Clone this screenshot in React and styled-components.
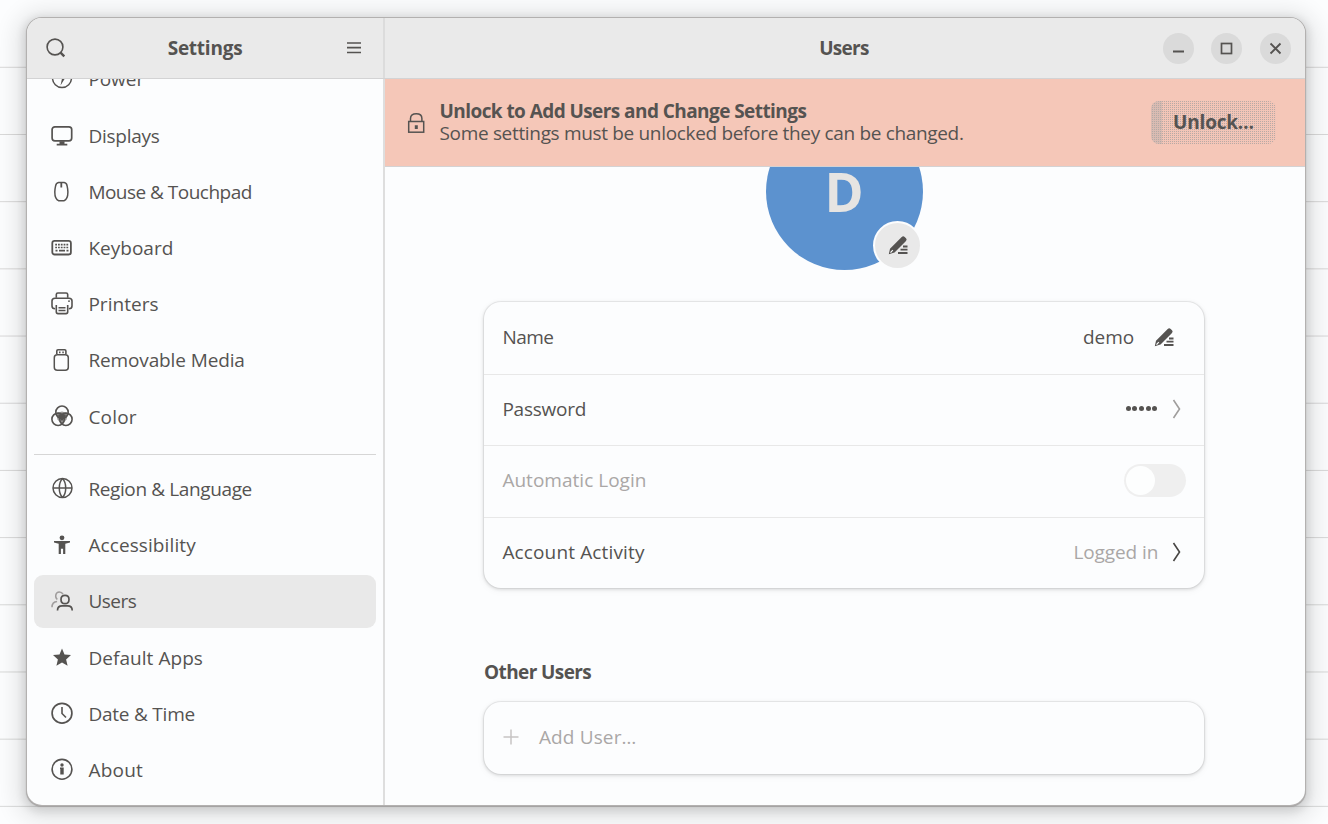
import React from "react";
import styled, { createGlobalStyle } from "styled-components";

const INK = "#555351";

const GlobalStyle = createGlobalStyle`
  * { box-sizing: border-box; }
  html, body { margin: 0; height: 100%; overflow: hidden; }
  body { font-family: "Open Sans", "Noto Sans", sans-serif; font-size: 19px; color: ${INK}; }
`;

const Desktop = styled.div`
  width: 1328px;
  height: 824px;
  padding: 18px 23px 19px 27px;
  background:
    linear-gradient(#fcfdfe, #fcfdfe) 0 0 / 100% 10px no-repeat,
    linear-gradient(to bottom, transparent 66.2px, #d8d8d8 66.2px) 0 0.6px / 100% 67.2px #fcfdfe;
`;

const Window = styled.div`
  display: flex;
  flex-direction: column;
  width: 1278px;
  height: 786.5px;
  overflow: hidden;
  border-radius: 15px;
  background: #fcfdfe;
  box-shadow: 0 0 0 1px #b3b1b0, 0 1px 1px 1px #a3a1a1, 0 3px 8px 4px rgba(0, 0, 0, 0.11),
    0 4px 22px 12px rgba(0, 0, 0, 0.09);
`;

const Header = styled.header`
  display: grid;
  grid-template-columns: 358px 1fr;
  height: 61px;
  flex: none;
  background: #eaeaea;
  border-bottom: 1px solid #d3d3d4;
`;

const SideHeader = styled.div`
  display: grid;
  grid-template-columns: 22px 1fr 22px;
  align-items: center;
  padding: 0 18px 0 18px;
  border-right: 2px solid #dcdcdc;
`;

const MainHeader = styled.div`
  display: grid;
  grid-template-columns: 128px 1fr 128px;
  align-items: center;
  padding: 0 14.5px 0 13.5px;
`;

const Title = styled.h1`
  margin: 0 1px 0 0;
  font-size: 19px;
  line-height: 26px;
  font-weight: 700;
  text-align: center;
  white-space: nowrap;
  letter-spacing: ${(p) => p.$ls || 0}px;
`;

const SideTitle = styled(Title)`
  margin: 0;
`;

const WindowButtons = styled.div`
  grid-column: 3;
  display: flex;
  justify-content: space-between;
`;

const RoundButton = styled.button`
  display: grid;
  place-items: center;
  width: 31px;
  height: 31px;
  padding: 0;
  border: 0;
  border-radius: 50%;
  background: #dadada;
  color: ${INK};
`;

const Body = styled.div`
  display: grid;
  grid-template-columns: 358px 1fr;
  flex: 1;
  min-height: 0;
`;

const Sidebar = styled.nav`
  overflow: hidden;
  padding: 0 7px;
  border-right: 2px solid #dedede;
`;

const NavList = styled.div`
  margin-top: ${(p) => p.$shift || 0}px;
  display: flex;
  flex-direction: column;
  gap: 2.7px;
`;

const NavItem = styled.div`
  display: flex;
  align-items: center;
  gap: 14.2px;
  height: 53.5px;
  padding-left: 16.2px;
  border-radius: 9px;
  background: ${(p) => (p.$active ? "#e9e9e9" : "transparent")};
`;

const Divider = styled.hr`
  height: 1px;
  margin: 10.5px 0 7.5px;
  border: 0;
  background: #d6d6d6;
`;

const Label = styled.span`
  white-space: nowrap;
  line-height: 26px;
  letter-spacing: ${(p) => p.$ls || 0}px;
  color: ${(p) => (p.$dim ? "#aaa7a6" : INK)};
`;

const Main = styled.main`
  display: flex;
  flex-direction: column;
  overflow: hidden;
`;

const Banner = styled.section`
  display: flex;
  align-items: center;
  flex: none;
  height: 88px;
  padding: 0 29px 0 22px;
  background: #f5c7b8;
  border-bottom: 1px solid #d4d2d3;
`;

const BannerText = styled.div`
  display: flex;
  flex-direction: column;
  flex: 1;
  margin: 0 0 0.4px 12.5px;
`;

const BannerTitle = styled.strong`
  line-height: 22px;
  font-weight: 700;
  letter-spacing: -0.57px;
`;

const BannerDetail = styled.span`
  line-height: 22px;
  letter-spacing: -0.33px;
`;

const UnlockButton = styled.button`
  width: 125px;
  height: 43px;
  margin-bottom: 1px;
  padding: 0 0 1px;
  border: 0;
  border-radius: 8px;
  background:
    linear-gradient(to right, rgba(170, 168, 168, 0.35) 11px, transparent 11px),
    repeating-conic-gradient(#b8aaa5 0 25%, #f3c5b7 0 100%) 0 0 / 2px 2px;
  color: ${INK};
  font: inherit;
  font-weight: 700;
  letter-spacing: -0.2px;
`;

const Content = styled.div`
  display: flex;
  flex-direction: column;
  align-items: center;
  flex: 1;
  min-height: 0;
  padding-right: 1.6px;
  overflow: hidden;
`;

const Avatar = styled.div`
  position: relative;
  flex: none;
  display: grid;
  place-items: center;
  width: 157px;
  height: 157px;
  margin-top: -54px;
  border-radius: 50%;
  background: #5c92cf;
  color: #e6e4e2;
  font: 700 53px/60px "Open Sans", "Noto Sans", sans-serif;
`;

const AvatarEdit = styled.button`
  position: absolute;
  right: 0.5px;
  bottom: 0.5px;
  display: grid;
  place-items: center;
  width: 49px;
  height: 49px;
  padding: 0;
  border: 2px solid #fcfdfe;
  border-radius: 50%;
  background: #e9e9e9;
  color: ${INK};
`;

const Card = styled.section`
  flex: none;
  width: 720px;
  margin-top: ${(p) => p.$top}px;
  border-radius: 17px;
  background: #fcfdfe;
  box-shadow: 0 0 0 1px rgba(0, 0, 0, 0.05), 0 1px 3px 1px rgba(0, 0, 0, 0.1), 0 2px 7px 2px rgba(0, 0, 0, 0.03);
`;

const Row = styled.div`
  display: flex;
  align-items: center;
  height: 71.5px;
  padding: 0 18px 2px 18.2px;
  & + & { border-top: 1px solid #e8e8e8; }
`;

const Value = styled.div`
  display: flex;
  align-items: center;
  gap: ${(p) => p.$gap}px;
  margin-left: auto;
  margin-right: ${(p) => p.$inset || 0}px;
`;

const AddAction = styled.div`
  display: flex;
  align-items: center;
  gap: 17.5px;
  margin: 1px 0 0 -1px;
`;

const Dots = styled.span`
  display: flex;
  gap: 1.6px;
  i { width: 5px; height: 5px; border-radius: 50%; background: ${INK}; }
`;

const Toggle = styled.span`
  display: flex;
  align-items: center;
  width: 62px;
  height: 33px;
  margin-top: 1px;
  padding: 2px;
  border-radius: 17px;
  background: #efefef;
  i { width: 29px; height: 29px; border-radius: 50%; background: #fdfefe; }
`;

const SectionTitle = styled.h2`
  align-self: flex-start;
  margin: 71px 0 0 99px;
  font-size: 19px;
  line-height: 26px;
  font-weight: 700;
  letter-spacing: -0.6px;
`;

const Glyph = styled.svg`
  display: block;
  flex: none;
  fill: none;
  stroke: currentColor;
`;

const ChevronGlyph = styled(Glyph)`
  color: ${(p) => (p.$dim ? "#a09e9d" : "#484644")};
`;

function Icon({ size = 24, children }) {
  return (
    <Glyph width={size} height={size} viewBox={`0 0 ${size} ${size}`} strokeWidth="1.5">
      {children}
    </Glyph>
  );
}

const solid = { fill: "currentColor", stroke: "none" };

const icons = {
  power: <><circle cx="12" cy="11" r="9.5" /><path d="M13.3 6 9.3 12h2.6l-1.4 6.5 5-8h-2.9z" {...solid} /></>,
  displays: (
    <>
      <rect x="2.1" y="2.8" width="19.6" height="14" rx="2.8" strokeWidth="1.7" />
      <path d="M9.5 17.2h5v2.6h2.8v1.6H6.7v-1.6h2.8z" {...solid} />
    </>
  ),
  mouse: (
    <>
      <path d="M8.6 2.6h5.600q2.400.4 2.900 3.200c.5 2.200.8 4.200.8 6.200 0 4.700-1.200 7.800-3.900 8.700H8.700C6 19.800 4.800 16.700 4.800 12c0-2 .3-4 .8-6.200q.6-2.800 3-3.200z" />
      <path d="M11.3 2.5v5" strokeWidth="1.8" />
    </>
  ),
  keyboard: (
    <>
      <rect x="2.3" y="4.900" width="18.6" height="13.6" rx="2.3" strokeWidth="1.8" />
      <path d="M5.2 8.700H18.5M5.2 11.500H18.5" strokeDasharray="1.8 1" strokeWidth="1.7" />
      <path d="M5.5 14.600h2M9 14.600h6M16.5 14.600h2" strokeWidth="1.7" />
    </>
  ),
  printers: (
    <>
      <path d="M6.3 5.7V2.6C6.3 1.5 6.8 1 7.9 1h8.2c1.1 0 1.6.5 1.6 1.6v3.1" strokeWidth="1.6" />
      <path d="M5.2 16.7C3 16.7 2 15.9 2 14V9.1C2 7.2 3.2 6.2 5 6.2h14c1.9 0 3 1 3 2.9V14c0 1.9-1 2.7-3.2 2.7" strokeWidth="1.6" />
      <path d="M6.3 13v6.8c0 1.2.6 1.8 1.7 1.8h8c1.1 0 1.7-.6 1.7-1.8V13" strokeWidth="1.6" />
      <path d="M8.5 15.7h7M8.5 18.4h7" strokeWidth="1.5" />
      <path d="M18 8.5h2v1.2h-2z" {...solid} />
    </>
  ),
  usb: (
    <>
      <rect x="4.3" y="6.7" width="14" height="15.5" rx="3" />
      <path d="M6.8 6V2.900c0-.8.4-1.200 1.200-1.200h6.700c.8 0 1.200.4 1.200 1.200V6" strokeWidth="1.6" />
      <path d="M9 3.400h1.500v1.800H9zM12.300 3.400h1.500v1.800h-1.500z" {...solid} />
    </>
  ),
  color: (
    <>
      <path d="M6 8 12 6.500 18 8l-1.500 6.500L12 20l-4.500-5.500z" fill="#9c9a99" stroke="none" />
      <circle cx="12" cy="7.200" r="6.200" strokeWidth="1.6" />
      <circle cx="8.100" cy="14.300" r="6.200" strokeWidth="1.6" />
      <circle cx="15.900" cy="14.300" r="6.200" strokeWidth="1.6" />
      <path d="M8 9.800Q12 8 16 9.800 15.500 13.600 12 16 8.500 13.600 8 9.800z" {...solid} />
    </>
  ),
  globe: (
    <>
      <circle cx="12.5" cy="11" r="9.5" />
      <path d="M3 11h19M12.5 1.500C8.200 6 8.200 16 12.500 20.500M12.500 1.500C16.800 6 16.800 16 12.500 20.500" />
    </>
  ),
  accessibility: (
    <g {...solid}>
      <circle cx="12" cy="4.800" r="2.400" />
      <path d="M4 8h16v1.600l-4.700 1.200v10.300h-2.200v-5.400h-2.200v5.400H8.700V10.800L4 9.600z" />
    </g>
  ),
  users: (
    <>
      <g stroke="#a09d9d">
        <path d="M7.300 10.500C4.600 8.300 5.400 3 9.300 3c1.900 0 3 .8 3.700 2.200M2 18.300c0-3.700 1.700-5.600 5.100-5.800" />
      </g>
      <path d="M11 10.500c0-2.700 1.500-4.100 4-4.100s4 1.400 4 4.100-1.500 4.200-4 4.200-4-1.500-4-4.200z" strokeWidth="1.7" />
      <path d="M7.500 21.500c0-3.100 1.500-4.600 4.600-4.600h5.500c3.100 0 4.600 1.500 4.600 4.600" strokeWidth="1.7" />
    </>
  ),
  star: <path d="m12 2.500 2.500 6 6.500.5-4.900 4.400 1.500 6.400L12 16.400l-5.600 3.400 1.500-6.400L3 9l6.500-.5z" {...solid} />,
  clock: <><circle cx="12" cy="11.200" r="9.900" strokeWidth="1.7" /><path d="M12 5v6.500l4 4" strokeWidth="1.6" /></>,
  info: (
    <>
      <circle cx="12" cy="11.300" r="9.900" strokeWidth="1.6" />
      <g {...solid}><circle cx="12" cy="7" r="1.700" /><path d="M10 9.500h3.700v7.100h-3.400V11H10z" /></g>
    </>
  ),
};

const DEVICES = [
  ["power", "Power", -0.06],
  ["displays", "Displays", -0.24],
  ["mouse", "Mouse & Touchpad", -0.52],
  ["keyboard", "Keyboard", 0.02],
  ["printers", "Printers", 0.04],
  ["usb", "Removable Media", -0.12],
  ["color", "Color", 0.2],
];

const SYSTEM = [
  ["globe", "Region & Language", -0.38],
  ["accessibility", "Accessibility", 0.1],
  ["users", "Users", -0.48],
  ["star", "Default Apps", 0.06],
  ["clock", "Date & Time", -0.22],
  ["info", "About", 0.25],
];

const NavRows = ({ items, shift }) => (
  <NavList $shift={shift}>
    {items.map(([icon, text, ls]) => (
      <NavItem key={text} $active={text === "Users"}>
        <Icon>{icons[icon]}</Icon>
        <Label $ls={ls}>{text}</Label>
      </NavItem>
    ))}
  </NavList>
);

const EditIcon = () => (
  <Icon size={20}>
    <path d="M.8 19.200 2 13.800 13.700 2q1.500-1.500 3 0l1.300 1.300q1.300 1.300 0 2.600L6.500 17.500z" {...solid} />
    <path d="m2.500 17.700 2.300-2.500" stroke="#fcfdfe" strokeWidth="1.2" />
    <path d="M15 11.500h4.500M12.500 14.700h7M10 18h9.500" strokeWidth="1.8" />
  </Icon>
);

const Chevron = ({ dim }) => (
  <ChevronGlyph $dim={dim} width="9" height="20" viewBox="0 0 9 20" strokeWidth="1.6">
    <path d="m1.500 1 6 9-6 9" />
  </ChevronGlyph>
);

export default function App() {
  return (
    <>
      <GlobalStyle />
      <Desktop>
        <Window>
          <Header>
            <SideHeader>
              <Icon size={22}>
                <circle cx="10" cy="10" r="7.9" strokeWidth="1.6" />
                <path d="m15.300 15.300 4 4" strokeWidth="2.4" />
              </Icon>
              <SideTitle $ls={-0.25}>Settings</SideTitle>
              <Icon size={22}><path d="M4 6h14M4 10.700h14M4 15.500h14" strokeWidth="1.7" /></Icon>
            </SideHeader>
            <MainHeader>
              <span />
              <Title $ls={-0.7}>Users</Title>
              <WindowButtons>
                <RoundButton aria-label="Minimize"><Icon size={15}><path d="M2 10.500h11" strokeWidth="2" /></Icon></RoundButton>
                <RoundButton aria-label="Maximize"><Icon size={15}><rect x="2.5" y="2.5" width="10" height="10" strokeWidth="1.7" /></Icon></RoundButton>
                <RoundButton aria-label="Close"><Icon size={15}><path d="m2.500 2.500 10 10m0-10-10 10" strokeWidth="1.9" /></Icon></RoundButton>
              </WindowButtons>
            </MainHeader>
          </Header>
          <Body>
            <Sidebar>
              <NavRows items={DEVICES} shift={-26.3} />
              <Divider />
              <NavRows items={SYSTEM} />
            </Sidebar>
            <Main>
              <Banner>
                <Icon size={20}>
                  <rect x="1.700" y="8.500" width="15" height="10.700" strokeWidth="1.5" />
                  <path d="M3.500 8.500V5.500C3.500 2.300 5.800.8 9.200.8s5.700 1.500 5.700 4.700v3" strokeWidth="1.5" />
                  <path d="M7.800 12.200h3v3.800h-3z" {...solid} />
                </Icon>
                <BannerText>
                  <BannerTitle>Unlock to Add Users and Change Settings</BannerTitle>
                  <BannerDetail>Some settings must be unlocked before they can be changed.</BannerDetail>
                </BannerText>
                <UnlockButton>Unlock…</UnlockButton>
              </Banner>
              <Content>
                <Avatar>
                  D
                  <AvatarEdit aria-label="Edit picture"><EditIcon /></AvatarEdit>
                </Avatar>
                <Card $top={32}>
                  <Row>
                    <Label $ls={-0.5}>Name</Label>
                    <Value $gap={20} $inset={12}><Label>demo</Label><EditIcon /></Value>
                  </Row>
                  <Row>
                    <Label $ls={-0.25}>Password</Label>
                    <Value $gap={14.5} $inset={5.5}>
                      <Dots><i /><i /><i /><i /><i /></Dots>
                      <Chevron dim />
                    </Value>
                  </Row>
                  <Row>
                    <Label $ls={0.02} $dim>Automatic Login</Label>
                    <Value><Toggle><i /></Toggle></Value>
                  </Row>
                  <Row>
                    <Label $ls={0.14}>Account Activity</Label>
                    <Value $gap={13.5} $inset={5.5}><Label $ls={-0.1} $dim>Logged in</Label><Chevron /></Value>
                  </Row>
                </Card>
                <SectionTitle>Other Users</SectionTitle>
                <Card $top={17}>
                  <Row>
                    <AddAction>
                      <Icon size={20}><path d="M2.500 10h15M10 2.500v15" stroke="#c6c4c4" /></Icon>
                      <Label $ls={0.14} $dim>Add User…</Label>
                    </AddAction>
                  </Row>
                </Card>
              </Content>
            </Main>
          </Body>
        </Window>
      </Desktop>
    </>
  );
}
